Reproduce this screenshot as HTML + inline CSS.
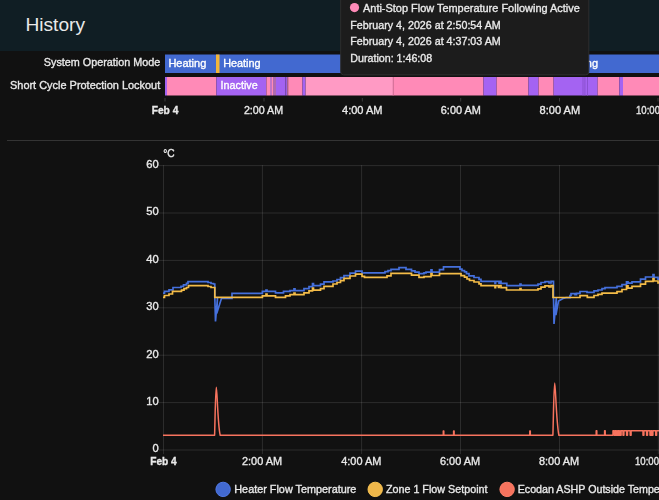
<!DOCTYPE html>
<html><head><meta charset="utf-8"><title>History</title>
<style>html,body{margin:0;padding:0;background:#111111;overflow:hidden;width:659px;height:500px;}
svg{display:block;font-family:"Liberation Sans",sans-serif;}svg.main{will-change:transform;}svg.main{position:absolute;left:0;top:0;}.hdr{position:absolute;left:0;top:0;width:659px;height:51px;background:#101e24;}</style></head>
<body>
<div class="hdr"><svg width="659" height="51" viewBox="0 0 659 51" font-family="Liberation Sans, sans-serif"><text x="25.4" y="30.7" font-size="18.50" font-weight="normal" fill="#e9e9e9" stroke="#e9e9e9" stroke-width="0" textLength="59.6" lengthAdjust="spacingAndGlyphs">History</text></svg></div>
<svg class="main" width="659" height="500" viewBox="0 0 659 500" font-family="Liberation Sans, sans-serif"><text x="43.8" y="66.1" font-size="11.20" font-weight="normal" fill="#e9e9e9" stroke="#e9e9e9" stroke-width="0.35" textLength="116.4" lengthAdjust="spacingAndGlyphs">System Operation Mode</text>
<text x="10.0" y="88.9" font-size="11.20" font-weight="normal" fill="#e9e9e9" stroke="#e9e9e9" stroke-width="0.35" textLength="150.2" lengthAdjust="spacingAndGlyphs">Short Cycle Protection Lockout</text>
<rect x="165" y="54.5" width="494" height="18.5" fill="#4269d0"/>
<rect x="216" y="54.5" width="3.5" height="18.5" fill="#f2b53a"/>
<rect x="553" y="54.5" width="3" height="18.5" fill="#f2b53a"/>
<text x="168.4" y="67.4" font-size="11.20" font-weight="normal" fill="#ffffff" stroke="#ffffff" stroke-width="0.35" textLength="37.9" lengthAdjust="spacingAndGlyphs">Heating</text>
<text x="223.2" y="67.4" font-size="11.20" font-weight="normal" fill="#ffffff" stroke="#ffffff" stroke-width="0.35" textLength="37.4" lengthAdjust="spacingAndGlyphs">Heating</text>
<text x="560.2" y="67.4" font-size="11.20" font-weight="normal" fill="#ffffff" stroke="#ffffff" stroke-width="0.35" textLength="37.9" lengthAdjust="spacingAndGlyphs">Heating</text>
<rect x="165.0" y="77" width="2.0" height="18.5" fill="#a463f2"/>
<rect x="167.0" y="77" width="49.4" height="18.5" fill="#ff8ab7"/>
<rect x="216.4" y="77" width="50.0" height="18.5" fill="#a463f2"/>
<rect x="266.4" y="77" width="3.6" height="18.5" fill="#ff8ab7"/>
<rect x="270.0" y="77" width="2.0" height="18.5" fill="#c274c8"/>
<rect x="272.0" y="77" width="1.0" height="18.5" fill="#ff8ab7"/>
<rect x="273.0" y="77" width="3.0" height="18.5" fill="#b06ab0"/>
<rect x="276.0" y="77" width="9.5" height="18.5" fill="#a463f2"/>
<rect x="285.5" y="77" width="1.8" height="18.5" fill="#9a5ce0"/>
<rect x="287.3" y="77" width="1.7" height="18.5" fill="#d878a8"/>
<rect x="289.0" y="77" width="13.5" height="18.5" fill="#ff8ab7"/>
<rect x="302.5" y="77" width="3.1" height="18.5" fill="#a463f2"/>
<rect x="305.6" y="77" width="87.6" height="18.5" fill="#ff9ac4"/>
<rect x="393.2" y="77" width="90.3" height="18.5" fill="#ff8ab7"/>
<rect x="483.5" y="77" width="13.1" height="18.5" fill="#a463f2"/>
<rect x="496.6" y="77" width="31.9" height="18.5" fill="#ff8ab7"/>
<rect x="528.5" y="77" width="10.1" height="18.5" fill="#a463f2"/>
<rect x="538.6" y="77" width="15.0" height="18.5" fill="#ff8ab7"/>
<rect x="553.6" y="77" width="44.1" height="18.5" fill="#a463f2"/>
<rect x="597.7" y="77" width="21.7" height="18.5" fill="#ff8ab7"/>
<rect x="619.4" y="77" width="3.6" height="18.5" fill="#a463f2"/>
<rect x="623.0" y="77" width="36.0" height="18.5" fill="#ff8ab7"/>
<rect x="392.7" y="77" width="1" height="18.5" fill="#d9729c"/>
<rect x="582.5" y="77" width="1" height="18.5" fill="#8a50d0"/><rect x="584.4" y="77" width="1" height="18.5" fill="#8a50d0"/><rect x="587" y="77" width="1" height="18.5" fill="#8a50d0"/>
<text x="220.6" y="88.8" font-size="11.20" font-weight="normal" fill="#ffffff" stroke="#ffffff" stroke-width="0.35" textLength="37.1" lengthAdjust="spacingAndGlyphs">Inactive</text>
<rect x="164.5" y="98" width="1" height="3.5" fill="#3a3a3a"/>
<rect x="263.5" y="98" width="1" height="3.5" fill="#3a3a3a"/>
<rect x="361.8" y="98" width="1" height="3.5" fill="#3a3a3a"/>
<rect x="460.2" y="98" width="1" height="3.5" fill="#3a3a3a"/>
<rect x="559.0" y="98" width="1" height="3.5" fill="#3a3a3a"/>
<rect x="657.5" y="98" width="1" height="3.5" fill="#3a3a3a"/>
<text x="151.7" y="113.8" font-size="11.20" font-weight="bold" fill="#e9e9e9" stroke="#e9e9e9" stroke-width="0.35" textLength="26.7" lengthAdjust="spacingAndGlyphs">Feb 4</text>
<text x="243.9" y="113.8" font-size="11.20" font-weight="normal" fill="#e9e9e9" stroke="#e9e9e9" stroke-width="0.35" textLength="39.3" lengthAdjust="spacingAndGlyphs">2:00 AM</text>
<text x="342.0" y="113.8" font-size="11.20" font-weight="normal" fill="#e9e9e9" stroke="#e9e9e9" stroke-width="0.35" textLength="40.5" lengthAdjust="spacingAndGlyphs">4:00 AM</text>
<text x="440.8" y="113.8" font-size="11.20" font-weight="normal" fill="#e9e9e9" stroke="#e9e9e9" stroke-width="0.35" textLength="40.0" lengthAdjust="spacingAndGlyphs">6:00 AM</text>
<text x="539.6" y="113.8" font-size="11.20" font-weight="normal" fill="#e9e9e9" stroke="#e9e9e9" stroke-width="0.35" textLength="40.5" lengthAdjust="spacingAndGlyphs">8:00 AM</text>
<text x="636.0" y="113.8" font-size="11.20" font-weight="normal" fill="#e9e9e9" stroke="#e9e9e9" stroke-width="0.35" textLength="40.5" lengthAdjust="spacingAndGlyphs">10:00 AM</text>
<rect x="7" y="140" width="652" height="1" fill="#343434"/>
<rect x="159" y="449.50" width="500" height="1" fill="rgba(255,255,255,0.115)"/>
<rect x="159" y="402.10" width="500" height="1" fill="rgba(255,255,255,0.115)"/>
<rect x="159" y="354.70" width="500" height="1" fill="rgba(255,255,255,0.115)"/>
<rect x="159" y="307.30" width="500" height="1" fill="rgba(255,255,255,0.115)"/>
<rect x="159" y="259.90" width="500" height="1" fill="rgba(255,255,255,0.115)"/>
<rect x="159" y="212.50" width="500" height="1" fill="rgba(255,255,255,0.115)"/>
<rect x="159" y="165.10" width="500" height="1" fill="rgba(255,255,255,0.115)"/>
<rect x="163.00" y="165.1" width="1" height="289" fill="rgba(255,255,255,0.115)"/>
<rect x="261.90" y="165.1" width="1" height="289" fill="rgba(255,255,255,0.115)"/>
<rect x="361.10" y="165.1" width="1" height="289" fill="rgba(255,255,255,0.115)"/>
<rect x="460.00" y="165.1" width="1" height="289" fill="rgba(255,255,255,0.115)"/>
<rect x="559.00" y="165.1" width="1" height="289" fill="rgba(255,255,255,0.115)"/>
<rect x="657.80" y="165.1" width="1" height="289" fill="rgba(255,255,255,0.115)"/>
<text x="158.7" y="452.4" font-size="11.2" fill="#e9e9e9" stroke="#e9e9e9" stroke-width="0.35" text-anchor="end">0</text>
<text x="158.7" y="405.0" font-size="11.2" fill="#e9e9e9" stroke="#e9e9e9" stroke-width="0.35" text-anchor="end">10</text>
<text x="158.7" y="357.6" font-size="11.2" fill="#e9e9e9" stroke="#e9e9e9" stroke-width="0.35" text-anchor="end">20</text>
<text x="158.7" y="310.2" font-size="11.2" fill="#e9e9e9" stroke="#e9e9e9" stroke-width="0.35" text-anchor="end">30</text>
<text x="158.7" y="262.8" font-size="11.2" fill="#e9e9e9" stroke="#e9e9e9" stroke-width="0.35" text-anchor="end">40</text>
<text x="158.7" y="215.4" font-size="11.2" fill="#e9e9e9" stroke="#e9e9e9" stroke-width="0.35" text-anchor="end">50</text>
<text x="158.7" y="168.0" font-size="11.2" fill="#e9e9e9" stroke="#e9e9e9" stroke-width="0.35" text-anchor="end">60</text>
<text x="163.2" y="157.3" font-size="11.50" font-weight="normal" fill="#e9e9e9" stroke="#e9e9e9" stroke-width="0.35" textLength="11.4" lengthAdjust="spacingAndGlyphs">°C</text>
<path d="M163 435.3 H214.6 C215.2 415 215.5 387.3 216.3 387.3 C217.1 387.3 217.7 425 220.2 435.3 H443.3 V431 H443.8 V435.3 H453.6 V431 H454.1 V435.3 H529.8 V431 H530.3 V435.3 H552.9 C553.5 415 553.9 383.1 554.7 383.1 C555.5 383.1 556.3 423 558.9 435.3 H596.2 V430.8 H596.8 V435.3 H604.6 V430.8 H605.2 V435.3 H613 V430.8 H614.3 V435.3 H615.2 V430.8 H615.8 V435.3 H616.7 V430.8 H617.3 V435.3 H618.2 V430.8 H618.8 V435.3 H619.7 V430.8 H620.2 V435.3 H621.1 V430.8 H623.0 V435.3 H623.9 V430.8 H626.6 V435.3 H627.5 V430.8 H630.2 V435.3 H631.1 V430.8 H643.0 V435.3 H643.9 V430.8 H646.6 V435.3 H647.5 V430.8 H650.0 V435.3 H650.9 V430.8 H652.0 V435.3 H652.9 V430.8 H655.7 V435.3 H656.6 V430.8 H659" fill="none" stroke="#f7735e" stroke-width="1.5" stroke-linejoin="round"/>
<path d="M163.0 293.2 H164.5 V291.3 H169.0 V289.8 H173.0 V287.5 H181.0 V286.4 H183.5 V284.9 H186.5 V283.3 H188.0 V281.7 H208.0 V282.5 H211.0 V283.5 H213.5 V284.0 H214.8 V297.0 L215.5 321.5 L217.5 297.8 L216.7 313.5 L221.5 298.3 H232.0 V293.3 H262.4 V291.4 H266.0 V290.0 H267.0 V291.4 H275.5 V292.9 H283.5 V291.4 H290.0 V290.6 H294.0 V288.8 H295.0 V290.6 H304.0 V288.6 H309.0 V286.7 H312.5 V283.7 H313.5 V285.6 H320.5 V284.2 H324.0 V281.9 H333.0 V281.0 H337.0 V279.5 H340.5 V277.6 H344.0 V275.7 H350.0 V273.2 H355.5 V271.1 H362.0 V273.0 H364.5 V272.8 H385.0 V271.7 H388.0 V270.6 H391.0 V269.4 H399.0 V267.6 H406.0 V269.4 H411.5 V270.9 H415.0 V272.1 H419.0 V273.6 H424.0 V272.8 H426.0 V272.1 H431.0 V269.8 H432.0 V272.1 H439.5 V269.6 H443.5 V266.9 H460.0 V269.1 H462.0 V270.6 H464.5 V271.8 H466.5 V273.7 H469.0 V275.9 H474.0 V277.5 H479.0 V279.3 H481.0 V281.4 H495.0 V283.4 H495.6 V281.4 H499.0 V283.2 H499.6 V281.4 H501.0 V283.4 H506.8 V285.7 H520.0 V284.0 H521.0 V285.4 H538.0 V284.2 H541.0 V282.5 H545.0 V281.7 H549.0 V283.0 H551.0 V281.3 H553.0 V281.3 H553.5 V297.0 L554.0 324.0 L556.3 298.0 L555.9 315.0 L558.5 301.0 L563.0 298.5 L566.0 297.6 H570.0 V295.5 H571.0 V293.6 H575.0 V294.6 H576.5 V293.4 H580.0 V291.5 H587.0 V292.3 H594.0 V290.9 H598.0 V290.0 H602.0 V288.6 H605.0 V287.7 H617.0 V286.4 H622.0 V284.6 H626.5 V281.8 H628.0 V283.2 H632.0 V281.9 H640.5 V279.2 H645.5 V277.0 H653.0 V274.5 H654.0 V277.4 H658.0 V279.2 H659.0 V279.2" fill="none" stroke="#4570dc" stroke-width="1.7" stroke-linejoin="miter"/>
<path d="M163.0 297.4 H164.5 V295.5 H169.0 V294.0 H172.5 V291.3 H181.5 V290.2 H184.0 V288.7 H186.5 V287.5 H188.5 V285.6 H208.0 V286.5 H211.0 V287.5 H214.8 V297.3 H262.4 V295.9 H266.0 V294.0 H267.0 V295.9 H275.5 V297.4 H285.5 V295.8 H290.0 V294.7 H294.0 V293.0 H295.0 V294.7 H304.0 V292.8 H309.0 V290.9 H312.5 V288.2 H313.5 V290.1 H320.5 V288.6 H324.0 V286.3 H333.0 V284.0 H337.0 V282.5 H340.5 V280.6 H344.0 V278.3 H350.0 V276.0 H355.5 V274.1 H362.0 V276.4 H364.5 V277.4 H387.0 V275.9 H391.0 V273.4 H411.5 V275.1 H419.0 V277.4 H424.0 V276.6 H431.0 V273.6 H432.0 V275.5 H439.5 V273.6 H461.0 V275.6 H464.5 V277.1 H467.0 V279.0 H469.5 V280.5 H474.0 V282.0 H479.0 V283.9 H481.0 V285.6 H495.0 V287.7 H495.6 V285.6 H498.5 V287.5 H499.1 V285.6 H501.0 V287.7 H506.5 V290.0 H520.0 V288.5 H521.0 V290.0 H538.0 V288.8 H541.0 V287.1 H545.0 V285.9 H549.0 V287.0 H551.0 V285.5 H553.0 V297.5 H580.0 V295.6 H587.3 V297.3 H594.0 V295.5 H598.0 V294.3 H602.0 V293.1 H617.0 V291.7 H622.0 V289.5 H626.5 V285.9 H628.0 V288.1 H632.0 V286.4 H640.5 V284.1 H645.5 V281.4 H653.0 V278.5 H654.0 V281.0 H658.0 V282.8 H659.0 V282.8" fill="none" stroke="#f4bc48" stroke-width="1.7" stroke-linejoin="miter"/>
<text x="150.2" y="465.1" font-size="11.20" font-weight="bold" fill="#e9e9e9" stroke="#e9e9e9" stroke-width="0.35" textLength="26.5" lengthAdjust="spacingAndGlyphs">Feb 4</text>
<text x="242.0" y="465.3" font-size="11.20" font-weight="normal" fill="#e9e9e9" stroke="#e9e9e9" stroke-width="0.35" textLength="40.0" lengthAdjust="spacingAndGlyphs">2:00 AM</text>
<text x="341.2" y="465.3" font-size="11.20" font-weight="normal" fill="#e9e9e9" stroke="#e9e9e9" stroke-width="0.35" textLength="40.1" lengthAdjust="spacingAndGlyphs">4:00 AM</text>
<text x="440.0" y="465.3" font-size="11.20" font-weight="normal" fill="#e9e9e9" stroke="#e9e9e9" stroke-width="0.35" textLength="40.1" lengthAdjust="spacingAndGlyphs">6:00 AM</text>
<text x="539.0" y="465.3" font-size="11.20" font-weight="normal" fill="#e9e9e9" stroke="#e9e9e9" stroke-width="0.35" textLength="40.1" lengthAdjust="spacingAndGlyphs">8:00 AM</text>
<text x="635.0" y="465.3" font-size="11.20" font-weight="normal" fill="#e9e9e9" stroke="#e9e9e9" stroke-width="0.35" textLength="40.5" lengthAdjust="spacingAndGlyphs">10:00 AM</text>
<circle cx="223.1" cy="489.4" r="7.2" fill="#4269d0" stroke="#5079e6" stroke-width="1"/>
<text x="234.3" y="493.2" font-size="11.20" font-weight="normal" fill="#e9e9e9" stroke="#e9e9e9" stroke-width="0.35" textLength="122.1" lengthAdjust="spacingAndGlyphs">Heater Flow Temperature</text>
<circle cx="375.2" cy="489.4" r="7.2" fill="#f0b84a" stroke="#f9c453" stroke-width="1"/>
<text x="385.9" y="493.2" font-size="11.20" font-weight="normal" fill="#e9e9e9" stroke="#e9e9e9" stroke-width="0.35" textLength="101.6" lengthAdjust="spacingAndGlyphs">Zone 1 Flow Setpoint</text>
<circle cx="507.1" cy="489.4" r="7.2" fill="#f7735e" stroke="#ff8069" stroke-width="1"/>
<text x="517.7" y="493.2" font-size="11.20" font-weight="normal" fill="#e9e9e9" stroke="#e9e9e9" stroke-width="0.35" textLength="170.0" lengthAdjust="spacingAndGlyphs">Ecodan ASHP Outside Temperature</text>
<rect x="340.7" y="-4" width="248.1" height="78.9" rx="3" fill="#1c1c1c" stroke="#2e2e2e" stroke-width="1"/>
<circle cx="354.5" cy="7.6" r="4.6" fill="#ff8ab7"/>
<text x="363.0" y="12.3" font-size="11.20" font-weight="normal" fill="#e9e9e9" stroke="#e9e9e9" stroke-width="0.35" textLength="216.8" lengthAdjust="spacingAndGlyphs">Anti-Stop Flow Temperature Following Active</text>
<text x="350.3" y="28.7" font-size="11.20" font-weight="normal" fill="#e9e9e9" stroke="#e9e9e9" stroke-width="0.35" textLength="150.4" lengthAdjust="spacingAndGlyphs">February 4, 2026 at 2:50:54 AM</text>
<text x="350.3" y="45.2" font-size="11.20" font-weight="normal" fill="#e9e9e9" stroke="#e9e9e9" stroke-width="0.35" textLength="150.4" lengthAdjust="spacingAndGlyphs">February 4, 2026 at 4:37:03 AM</text>
<text x="350.3" y="61.8" font-size="11.20" font-weight="normal" fill="#e9e9e9" stroke="#e9e9e9" stroke-width="0.35" textLength="81.9" lengthAdjust="spacingAndGlyphs">Duration: 1:46:08</text></svg>
</body></html>
